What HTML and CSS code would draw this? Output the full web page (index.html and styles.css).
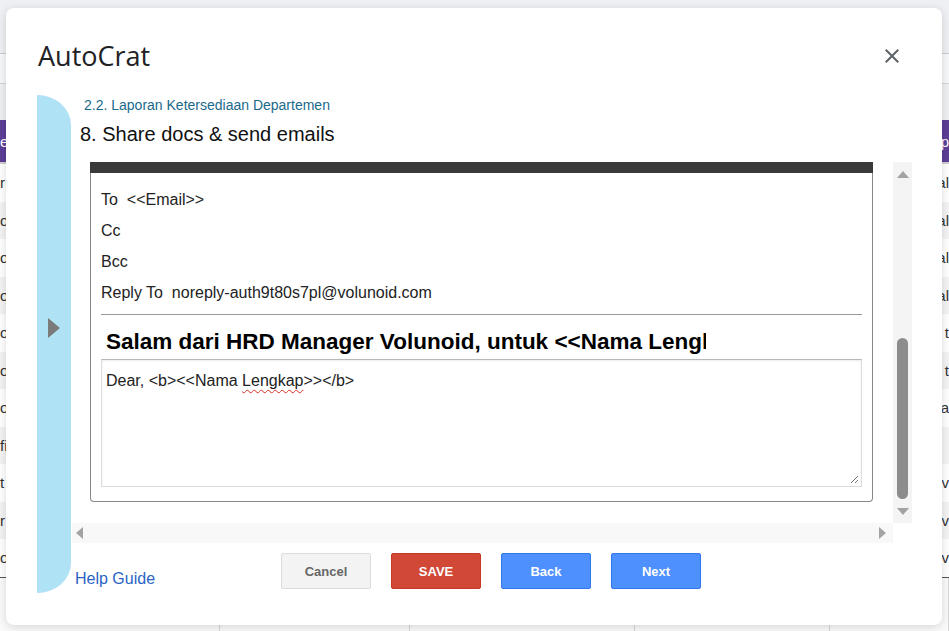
FILE: index.html
```html
<!DOCTYPE html>
<html lang="en">
<head>
    <meta charset="utf-8">
    <title>AutoCrat</title>
    <link rel="stylesheet" href="styles.css">
</head>
<body>
    <div class="sheet">
        <div class="sheet-top"></div>
        <div class="sheet-bar"></div>
        <div class="sheet-gap"></div>
        <div class="sheet-row head"><span>e</span><span>p</span></div>
        <div class="sheet-row"><span>r</span><span>al</span></div>
        <div class="sheet-row alt"><span>o</span><span>al</span></div>
        <div class="sheet-row"><span>o</span><span>al</span></div>
        <div class="sheet-row alt"><span>o</span><span>al</span></div>
        <div class="sheet-row"><span>o</span><span>t</span></div>
        <div class="sheet-row alt"><span>o</span><span>t</span></div>
        <div class="sheet-row"><span>o</span><span>a</span></div>
        <div class="sheet-row alt"><span>fi</span><span></span></div>
        <div class="sheet-row"><span>t</span><span>v</span></div>
        <div class="sheet-row alt"><span>r</span><span>v</span></div>
        <div class="sheet-row last"><span>o</span><span>v</span></div>
        <div class="sheet-foot"><i></i><i></i><i></i><i></i><i></i></div>
    </div>

    <div class="dialog">
        <div class="dlg-head">
            <h1>AutoCrat</h1>
            <button class="close" aria-label="Close">
                <svg width="24" height="24" viewBox="0 0 24 24"><path d="M19 6.41L17.59 5 12 10.59 6.41 5 5 6.41 10.59 12 5 17.59 6.41 19 12 13.41 17.59 19 19 17.59 13.41 12z" fill="#5f6368"/></svg>
            </button>
        </div>
        <div class="dlg-body">
            <div class="side-tab"><span class="tri"></span></div>
            <div class="main">
                <div class="crumb">2.2. Laporan Ketersediaan Departemen</div>
                <div class="step">8. Share docs &amp; send emails</div>
                <div class="scroller">
                    <div class="viewport">
                        <div class="mail">
                            <div class="mail-bar"></div>
                            <div class="fields">
                                <div class="field">To&nbsp;&nbsp;&lt;&lt;Email&gt;&gt;</div>
                                <div class="field">Cc</div>
                                <div class="field">Bcc</div>
                                <div class="field">Reply To&nbsp;&nbsp;noreply-auth9t80s7pl@volunoid.com</div>
                            </div>
                            <div class="rule"></div>
                            <div class="subject">Salam dari HRD Manager Volunoid, untuk &lt;&lt;Nama Lengkap&gt;&gt;</div>
                            <div class="body-text">Dear, &lt;b&gt;&lt;&lt;Nama <span class="typo">Lengkap</span>&gt;&gt;&lt;/b&gt;
                                <svg class="grip" width="9" height="9" viewBox="0 0 9 9"><path d="M8 1L1 8M8 5L5 8" stroke="#777" stroke-width="1"/></svg>
                            </div>
                        </div>
                    </div>
                    <div class="vbar">
                        <div class="vbtn"><span class="arr up"></span></div>
                        <div class="track"><div class="thumb"></div></div>
                        <div class="vbtn"><span class="arr down"></span></div>
                    </div>
                    <div class="hbar">
                        <span class="arr left"></span>
                        <span class="arr right"></span>
                    </div>
                    <div class="corner"></div>
                </div>
                <div class="footer">
                    <a class="help" href="#">Help Guide</a>
                    <div class="buttons">
                        <button class="btn cancel">Cancel</button>
                        <button class="btn save">SAVE</button>
                        <button class="btn blue">Back</button>
                        <button class="btn blue">Next</button>
                    </div>
                </div>
            </div>
        </div>
    </div>
</body>
</html>
```

FILE: styles.css
```css
body {
    margin: 0;
    width: 949px;
    height: 631px;
    overflow: hidden;
    position: relative;
    background-color: #eef0f3;
    font-family: "Liberation Sans", Arial, sans-serif;
    color: #222;
}

/* spreadsheet behind the dialog */
.sheet-top {
    height: 53px;
    background-color: #eef0f3;
    border-bottom: 1px solid #c9cbce;
}

.sheet-bar {
    height: 29px;
    background-color: #f7f8f9;
    border-bottom: 1px solid #d3d5d8;
}

.sheet-gap {
    height: 36px;
    background-color: #eef0f2;
}

.sheet-row {
    height: 37.5px;
    display: flex;
    justify-content: space-between;
    align-items: center;
    background-color: #fff;
    font-size: 15px;
    color: #333;
}

.sheet-row.alt {
    background-color: #f4f4f4;
}

.sheet-row.head {
    height: 42px;
    background-color: #5d3e98;
    color: #fff;
    border-bottom: 2px solid #cfcfcf;
}

.sheet-row.last {
    border-bottom: 1px solid #555;
}

.sheet-foot {
    height: 60px;
    display: grid;
    grid-template-columns: 220px 190px 225px 195px 1fr;
    background-color: #fafafa;
}

.sheet-foot i {
    border-right: 1px solid #d6d6d6;
}

/* dialog */
.dialog {
    position: absolute;
    left: 6px;
    top: 8px;
    width: 936px;
    height: 617px;
    background-color: #fff;
    border-radius: 8px;
    box-shadow: 0 2px 10px rgba(0, 0, 0, 0.15);
    display: flex;
    flex-direction: column;
}

.dlg-head {
    height: 87px;
    box-sizing: border-box;
    padding: 8px 38px 0 32px;
    display: flex;
    justify-content: space-between;
    align-items: center;
}

.dlg-head h1 {
    margin: 0;
    font-family: "Open Sans", Roboto, sans-serif;
    font-weight: 400;
    font-size: 27px;
    color: #202124;
}

.close {
    border: none;
    background: none;
    padding: 0;
    width: 24px;
    height: 24px;
    cursor: pointer;
}

.dlg-body {
    flex: 1;
    display: flex;
}

.side-tab {
    flex: none;
    margin-left: 31px;
    width: 34px;
    height: 498px;
    background-color: #b0e2f5;
    border-radius: 0 34px 34px 0 / 0 30px 30px 0;
    box-sizing: border-box;
    padding-top: 223px;
    display: flex;
    justify-content: center;
    align-items: flex-start;
}

.tri {
    width: 0;
    height: 0;
    border-left: 12px solid #7a7a7a;
    border-top: 10px solid transparent;
    border-bottom: 10px solid transparent;
}

.main {
    flex: 1;
    margin-left: 1px;
    margin-right: 30px;
    display: flex;
    flex-direction: column;
}

.crumb {
    margin: 1px 0 0 12px;
    font-size: 14px;
    line-height: 18px;
    color: #1b6a8b;
}

.step {
    margin: 8px 0 6px 8px;
    font-size: 20px;
    line-height: 24px;
    color: #111;
}

/* scrolling area */
.scroller {
    display: grid;
    grid-template-columns: 1fr 19px;
    grid-template-rows: 371px 20px;
}

.viewport {
    overflow: hidden;
    padding-top: 10px;
}

.mail {
    margin-left: 18px;
    width: 783px;
    box-sizing: border-box;
    border: 1px solid #888;
    border-top: none;
    border-radius: 0 0 4px 4px;
}

.mail-bar {
    height: 11px;
    background-color: #3a3a3a;
    margin: 0 -1px;
}

.fields {
    padding: 11px 0 0 10px;
}

.field {
    height: 31px;
    line-height: 31px;
    font-size: 16px;
    color: #222;
    white-space: nowrap;
}

.rule {
    margin: 6px 10px 0;
    height: 1px;
    background-color: #999;
}

.subject {
    width: 605px;
    height: 44px;
    box-sizing: border-box;
    margin-left: 10px;
    padding: 10px 0 0 5px;
    overflow: hidden;
    white-space: nowrap;
    font-size: 22.5px;
    font-weight: bold;
    line-height: 34px;
    color: #000;
}

.body-text {
    position: relative;
    margin: 0 10px 14px;
    height: 128px;
    box-sizing: border-box;
    border: 1px solid #dcdcdc;
    border-top-color: #b8b8b8;
    box-shadow: inset 0 1px 2px rgba(0, 0, 0, 0.08);
    padding: 11px 4px;
    font-size: 16px;
    line-height: 19px;
    color: #222;
}

.typo {
    text-decoration: underline wavy #d93025;
    text-decoration-skip-ink: none;
    text-underline-offset: 3px;
    text-decoration-thickness: 1px;
}

.grip {
    position: absolute;
    right: 2px;
    bottom: 2px;
}

.vbar {
    margin-top: 10px;
    background-color: #f4f4f4;
    display: flex;
    flex-direction: column;
}

.vbtn {
    height: 24px;
    display: flex;
    justify-content: center;
    align-items: center;
}

.track {
    flex: 1;
    display: flex;
    flex-direction: column;
    justify-content: flex-end;
}

.thumb {
    width: 11px;
    height: 161px;
    margin: 0 auto;
    border-radius: 6px;
    background-color: #8c8c8c;
}

.hbar {
    background-color: #f8f8f8;
    display: flex;
    justify-content: space-between;
    align-items: center;
    padding: 0 7px 0 4px;
}

.corner {
    background-color: #fff;
}

.arr {
    width: 0;
    height: 0;
}

.arr.up {
    border-bottom: 7px solid #a3a3a3;
    border-left: 6px solid transparent;
    border-right: 6px solid transparent;
}

.arr.down {
    border-top: 7px solid #a3a3a3;
    border-left: 6px solid transparent;
    border-right: 6px solid transparent;
}

.arr.left {
    border-right: 7px solid #a3a3a3;
    border-top: 6px solid transparent;
    border-bottom: 6px solid transparent;
}

.arr.right {
    border-left: 7px solid #a3a3a3;
    border-top: 6px solid transparent;
    border-bottom: 6px solid transparent;
}

/* footer */
.footer {
    display: grid;
    grid-template-columns: 1fr auto 1fr;
    padding-top: 10px;
}

.help {
    align-self: end;
    padding-left: 3px;
    font-size: 16px;
    line-height: 20px;
    color: #2a63c4;
    text-decoration: none;
}

.buttons {
    display: flex;
    gap: 20px;
    margin-left: -2px;
}

.btn {
    width: 90px;
    height: 36px;
    border-radius: 2px;
    border: 1px solid #3079ed;
    background-color: #4d90fe;
    color: #fff;
    font-family: "Liberation Sans", Arial, sans-serif;
    font-size: 13px;
    font-weight: bold;
    cursor: pointer;
}

.btn.cancel {
    background-color: #f3f3f3;
    border-color: #dcdcdc;
    color: #666;
}

.btn.save {
    background-color: #d14836;
    border-color: #c53727;
}
```
